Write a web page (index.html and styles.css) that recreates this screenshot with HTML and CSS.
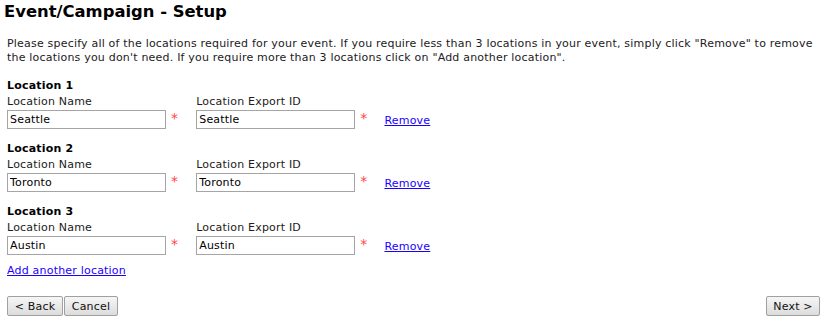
FILE: index.html
```html
<!DOCTYPE html>
<html lang="en">
<head>
  <meta charset="UTF-8">
  <title>Event/Campaign - Setup</title>
  <link rel="stylesheet" href="styles.css">
</head>
<body>
  <h1>Event/Campaign - Setup</h1>
  <p class="intro">Please specify all of the locations required for your event. If you require less than 3 locations in your event, simply click "Remove" to remove the locations you don't need. If you require more than 3 locations click on "Add another location".</p>

  <div class="location">
    <h3>Location 1</h3>
    <div class="fields">
      <label class="field">Location Name
        <input type="text" value="Seattle">
      </label>
      <span class="req">*</span>
      <label class="field">Location Export ID
        <input type="text" value="Seattle">
      </label>
      <span class="req">*</span>
      <a href="#" class="remove">Remove</a>
    </div>
  </div>

  <div class="location">
    <h3>Location 2</h3>
    <div class="fields">
      <label class="field">Location Name
        <input type="text" value="Toronto">
      </label>
      <span class="req">*</span>
      <label class="field">Location Export ID
        <input type="text" value="Toronto">
      </label>
      <span class="req">*</span>
      <a href="#" class="remove">Remove</a>
    </div>
  </div>

  <div class="location">
    <h3>Location 3</h3>
    <div class="fields">
      <label class="field">Location Name
        <input type="text" value="Austin">
      </label>
      <span class="req">*</span>
      <label class="field">Location Export ID
        <input type="text" value="Austin">
      </label>
      <span class="req">*</span>
      <a href="#" class="remove">Remove</a>
    </div>
  </div>

  <a href="#" class="add">Add another location</a>

  <div class="nav">
    <div class="nav-left">
      <button type="button" class="btn-back">&lt; Back</button>
      <button type="button" class="btn-cancel">Cancel</button>
    </div>
    <button type="button" class="btn-next">Next &gt;</button>
  </div>
</body>
</html>
```

FILE: styles.css
```css
* {
  box-sizing: border-box;
}
body {
  font-family: Verdana, "DejaVu Sans", sans-serif;
  font-size: 11px;
  line-height: 14px;
  letter-spacing: 0.2px;
  color: #221a22;
  background: #fff;
  margin: 0;
  padding: 1px 9px 0 7px;
}
h1 {
  font-size: 16.4px;
  line-height: 22px;
  letter-spacing: 0;
  margin: 0 0 0 -3px;
  color: #000;
}
.intro {
  margin: 14px 0 0;
}
.location {
  margin-top: 14px;
}
.location + .location {
  margin-top: 13px;
}
.location h3 {
  font-size: 11px;
  line-height: 14px;
  margin: 0;
  color: #000;
}
.fields {
  display: flex;
  align-items: flex-end;
  margin-top: 2px;
}
.field {
  display: flex;
  flex-direction: column;
  gap: 1px;
}
.field input {
  width: 159px;
  height: 19px;
  margin: 0;
  padding: 0 2px;
  border: 1px solid #a5a5a5;
  font-family: inherit;
  font-size: 11px;
  letter-spacing: 0.2px;
  color: #000;
}
.req {
  align-self: flex-start;
  margin: 17px 18px 0 5px;
  color: #ff4646;
  font-size: 14px;
  line-height: 12px;
}
.remove {
  color: #1a00ff;
  margin: 0 0 1px -1px;
}
.add {
  display: inline-block;
  margin-top: 9px;
  color: #1a00ff;
}
.nav {
  display: flex;
  justify-content: space-between;
  margin-top: 18px;
}
.nav-left {
  display: flex;
  gap: 1px;
}
button {
  height: 20px;
  margin: 0;
  padding: 0;
  font-family: inherit;
  font-size: 11px;
  letter-spacing: 0.2px;
  color: #111;
  background: linear-gradient(#f6f6f6, #dcdcdc);
  border: 1px solid #a0a0a0;
  border-radius: 2px;
}
.btn-back {
  width: 56px;
}
.btn-cancel,
.btn-next {
  width: 54px;
}
```
